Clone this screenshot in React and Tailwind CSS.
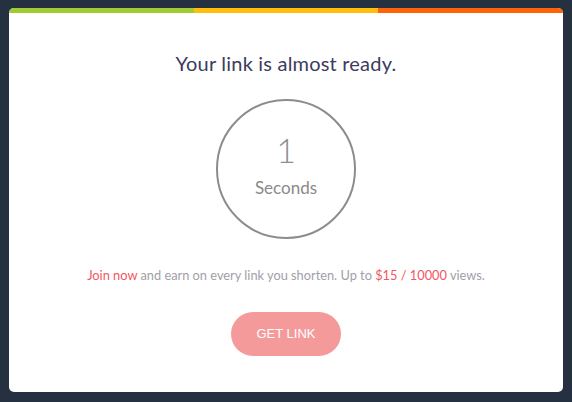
export default function App() {
  return (
    <div className="min-h-[402px] bg-[#253141] px-[9px] pt-[8px] pb-[10px]" style={{ fontFamily: 'Lato, "Noto Sans", sans-serif' }}>
      <div className="bg-white rounded-[5px] overflow-hidden h-[384px] flex flex-col">
        <div className="flex h-[5px]">
          <div className="flex-1 bg-[#a0cb35]"></div>
          <div className="flex-1 bg-[#ffbe0b]"></div>
          <div className="flex-1 bg-[#ff6308]"></div>
        </div>
        <div className="flex flex-col items-center">
          <h1 className="mt-[38px] text-[20px] leading-[24px] tracking-[0.2px] text-[#3b3c5e]">Your link is almost ready.</h1>
          <div className="mt-[24px] w-[140px] h-[140px] rounded-full border-2 border-[#8c8c8c] flex flex-col items-center justify-center">
            <div className="text-[34px] leading-[34px] text-[#8e8e99] font-light -mt-[6px]">1</div>
            <div className="text-[17px] leading-[22px] text-[#8a8a8a] mt-[10px]">Seconds</div>
          </div>
          <p className="mt-[27px] text-[12.8px] leading-[18px] text-[#a0a0a8]">
            <span className="text-[#f2555f]">Join now</span> and earn on every link you shorten. Up to{' '}
            <span className="text-[#f2555f]">$15 / 10000</span> views.
          </p>
          <button className="mt-[28px] w-[110px] h-[44px] rounded-full bg-[#f59a9b] text-white text-[13px] uppercase" style={{ fontFamily: '"Liberation Sans", Arial, sans-serif' }}>
            Get Link
          </button>
        </div>
      </div>
    </div>
  );
}
